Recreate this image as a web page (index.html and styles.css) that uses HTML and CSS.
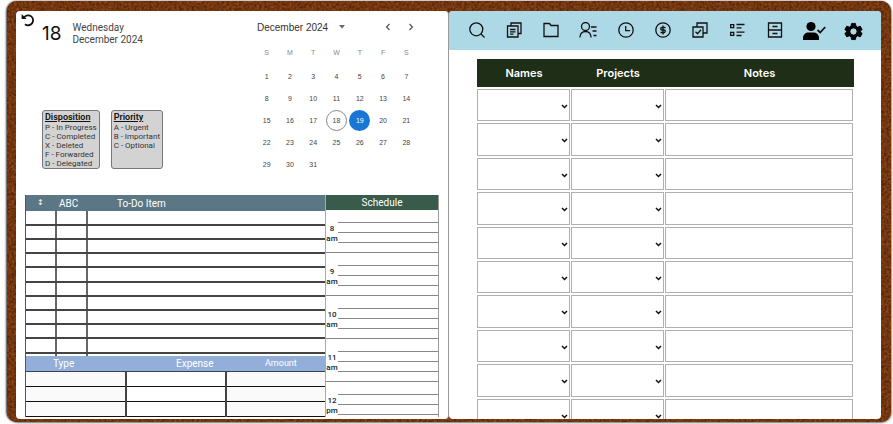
FILE: index.html
```html
<!DOCTYPE html>
<html lang="en">
<head>
<meta charset="utf-8">
<title>Day Planner</title>
<link rel="stylesheet" href="styles.css">
</head>
<body>
<main class="binder">
  <svg class="leather" aria-hidden="true">
    <filter id="grain" x="0" y="0" width="100%" height="100%" color-interpolation-filters="sRGB">
      <feTurbulence type="fractalNoise" baseFrequency="0.4" numOctaves="3" seed="4"/>
      <feColorMatrix values="0.4 0 0 0 0.25  0.24 0 0 0 0.09  0.12 0 0 0 0  0 0 0 0 1"/>
    </filter>
    <rect width="100%" height="100%" filter="url(#grain)"/>
  </svg>

  <section class="page page-left">
    <div class="top">
      <div class="top-info">
        <button class="undo" aria-label="Back to today">
          <svg viewBox="0 0 14 14" width="14" height="14"><path d="M3.2 4.2A5 5 0 1 1 4 11.2" fill="none" stroke="#111" stroke-width="1.8"/><path d="M.6 1v5h5z" fill="#111"/></svg>
        </button>
        <div class="date">
          <span class="day-number">18</span>
          <span class="day-text">Wednesday<br>December 2024</span>
        </div>
        <div class="legends">
          <div class="legend"><h2>Disposition</h2><ul><li>P - In Progress</li><li>C - Completed</li><li>X - Deleted</li><li>F - Forwarded</li><li>D - Delegated</li></ul></div>
          <div class="legend"><h2>Priority</h2><ul><li>A - Urgent</li><li>B - Important</li><li>C - Optional</li></ul></div>
        </div>
      </div>
      <div class="calendar">
        <div class="cal-head">
          <span>December 2024</span>
          <button aria-label="Choose year"><svg viewBox="0 0 8 6" width="8" height="6"><path d="M1 1h6L4 4.500z" fill="#666"/></svg></button>
          <span class="grow"></span>
          <button class="cal-nav" aria-label="Previous month"><svg viewBox="0 0 8 8" width="8" height="8"><path d="M5.500 1 2.500 4l3 3" fill="none" stroke="#555" stroke-width="1.200"/></svg></button>
          <button class="cal-nav" aria-label="Next month"><svg viewBox="0 0 8 8" width="8" height="8"><path d="m2.500 1 3 3-3 3" fill="none" stroke="#555" stroke-width="1.200"/></svg></button>
        </div>
        <div class="weekdays"><span>S</span><span>M</span><span>T</span><span>W</span><span>T</span><span>F</span><span>S</span></div>
        <div class="days" id="days"></div>
      </div>
    </div>

    <div class="lists">
      <div class="lists-main">
        <div class="todo-wrap">
          <table class="todo">
            <thead><tr><th class="c-mark">↕</th><th class="c-abc">ABC</th><th class="c-item">To-Do Item</th></tr></thead>
            <tbody id="todo"></tbody>
          </table>
        </div>
        <table class="expense">
          <thead><tr><th class="e-type">Type</th><th class="e-name">Expense</th><th class="e-amount">Amount</th></tr></thead>
          <tbody id="expense"></tbody>
        </table>
      </div>
      <div class="schedule">
        <h2>Schedule</h2>
        <div id="hours"></div>
      </div>
    </div>
  </section>

  <section class="page page-right">
    <nav class="toolbar">
      <button aria-label="Search"><svg viewBox="0 0 16 16"><circle cx="7.300" cy="7.300" r="6.500"/><path d="m12 12 3.500 3.500"/></svg></button>
      <button aria-label="Documents"><svg viewBox="0 0 16 16"><path d="M5 4V1h10v10.500h-3M1.500 4H12v11H1.500zM4 7.500h5.500M4 9.800h5.500M4 12.100h3.500"/></svg></button>
      <button aria-label="Folder"><svg viewBox="0 0 16 16"><path d="M1 1.500h5.500L8 3.500h7v11H1z"/></svg></button>
      <button aria-label="Contacts"><svg viewBox="0 0 18 16" class="wide"><circle cx="6.500" cy="4.500" r="4"/><path d="M.8 15.500C1.200 11.500 3.500 9.500 6.500 9.500s5.300 2 5.700 6M12 5h5.500M13.500 9h4M14.500 13.500h3"/></svg></button>
      <button aria-label="Time"><svg viewBox="0 0 16 16"><circle cx="8" cy="8" r="7.200"/><path d="M7.700 4v4.700H12"/></svg></button>
      <button aria-label="Finance"><svg viewBox="0 0 16 16"><circle cx="8" cy="8" r="7.200"/><path d="M10.500 5.500H7A1.200 1.200 0 0 0 7 8h2a1.200 1.200 0 0 1 0 2.500H5.500M8 3.500v9"/></svg></button>
      <button aria-label="Tasks"><svg viewBox="0 0 16 16"><path d="M5 5V1h10v10h-4M1 5h10v10H1zM3.500 9.800l2 2 3.500-4"/></svg></button>
      <button aria-label="List"><svg viewBox="0 0 16 16"><path d="M1.700 2.700h3v3h-3zM1.700 10.300h3v3h-3zM7.500 2.500h8M7.500 5.800h5M7.500 10.200h8M7.500 13.500h5"/></svg></button>
      <button aria-label="Archive"><svg viewBox="0 0 16 16"><path d="M1.500 1h13v14h-13zM1.500 8h13M5.500 4.500h5M5.500 11.500h5"/></svg></button>
      <button aria-label="Account"><svg viewBox="0 0 24 20" class="account"><circle cx="9" cy="5.500" r="4.600" fill="#000" stroke="none"/><path d="M1 19v-2c0-3.500 2.500-5.500 6-5.500h4c3.500 0 6 2 6 5.500v2z" fill="#000" stroke="none"/><path d="m15.500 9 2.700 2.500 5-5.500" stroke-width="1.800"/></svg></button>
      <button aria-label="Settings"><svg viewBox="0 0 20 20" class="gear"><path fill="#000" stroke="#000" stroke-width="1" stroke-linejoin="round" fill-rule="evenodd" d="M8 1.500h4l.6 2.900 1.700 1 2.800-1 2 3.500-2.200 2 0 .2 2.200 2-2 3.500-2.800-1-1.700 1-.6 2.900H8l-.6-2.900-1.700-1-2.800 1-2-3.500 2.200-2 0-.2-2.200-2 2-3.500 2.800 1 1.700-1zM10 6.200a3.800 3.800 0 1 0 0 7.600 3.800 3.800 0 1 0 0-7.600z"/></svg></button>
    </nav>
    <div class="notes-wrap">
      <table class="notes">
        <thead><tr><th class="n-name">Names</th><th class="n-project">Projects</th><th>Notes</th></tr></thead>
      </table>
      <table class="notes notes-body">
        <tbody id="notes"></tbody>
      </table>
    </div>
  </section>
</main>
<script src="planner.js"></script>
</body>
</html>
```

FILE: styles.css
```css
* { box-sizing: border-box; }
body {
  margin: 0;
  height: 100vh;
  padding: 1px 2px 2px 7px;
  overflow: hidden;
  background: #fff;
  font-family: Roboto, "Liberation Sans", sans-serif;
  color: #222;
}
h2, ul { margin: 0; padding: 0; list-style: none; }
button { border: 0; padding: 0; background: none; font: inherit; color: inherit; }
table { border-collapse: collapse; table-layout: fixed; width: 100%; }
th, td { padding: 0; }

.binder {
  position: relative;
  display: flex;
  height: 100%;
  padding: 10px 10px 3px 9px;
  border-radius: 10px;
  background: #703610;
  box-shadow: -1px 0 2px #444, 1px 1px 2px #999;
}
.leather { position: absolute; inset: 0; width: 100%; height: 100%; border-radius: 10px; }
.page { position: relative; flex: 1 1 0; min-width: 0; background: #fff; overflow: hidden; border-radius: 4px; }
.page-left { display: flex; flex-direction: column; border-right: 1px solid #999; }

.top { display: flex; justify-content: space-between; height: 184px; padding: 0 30px 0 5px; }
.undo { display: block; height: 14px; margin-top: 2px; }
.undo svg { display: block; }
.date { display: flex; align-items: center; gap: 11px; padding-left: 21px; height: 14px; }
.day-number { font-family: Inter, sans-serif; font-size: 19px; line-height: 22px; color: #111; }
.day-text { font-size: 10px; line-height: 12px; color: #444; }
.legends { display: flex; gap: 11px; padding: 69px 0 0 21px; }
.legend { height: 59px; padding: 1px 2px; border: 1px solid #777; border-radius: 3px; background: #d3d3d3; }
.legend h2 { font-size: 9px; line-height: 11px; text-decoration: underline; font-weight: 600; color: #111; }
.legend li { font-size: 8px; line-height: 9px; color: #333; white-space: nowrap; }

.calendar { width: 163px; font-family: "Liberation Sans", sans-serif; }
.cal-head { display: flex; align-items: center; height: 32px; padding-left: 2px; font-size: 10px; color: #333; }
.cal-head button { width: 23px; height: 20px; display: grid; place-items: center; margin-left: 2px; }
.cal-head .cal-nav { margin: 0; }
.cal-head .cal-nav:last-child { margin-right: -4px; }
.grow { flex: 1; }
.weekdays, .days { display: grid; grid-template-columns: repeat(7, 1fr); justify-items: center; align-items: center; font-size: 7px; }
.weekdays { height: 18px; color: #888; }
.days { grid-auto-rows: 22px; padding-top: 4px; color: #444; }
.days button { width: 21px; height: 21px; border-radius: 50%; }
.days .today { border: 1px solid #888; }
.days .selected { background: #1976d2; color: #fff; }

.lists { display: flex; flex: 1; min-height: 0; padding: 0 9px 2px; }
.lists-main { display: flex; flex-direction: column; width: 301px; border-left: 1px solid #555; border-right: 1px solid #aaa; }
.lists-main th { color: #fff; font-weight: 400; font-size: 10px; text-align: left; }
.todo-wrap { flex: 1; min-height: 0; overflow: hidden; }
.todo th { height: 16px; background: #5b7785; }
.todo td { height: 14px; border-bottom: 2px solid #444; border-right: 2px solid #666; }
.todo tr:nth-child(5n) td { height: 15px; }
.todo td:last-child { border-right: 0; }
.c-mark { width: 30px; }
.c-abc { width: 31px; }
.todo .c-mark { padding-left: 11px; font-family: "DejaVu Sans", sans-serif; font-size: 8px; line-height: 10px; }
.todo .c-abc { padding-left: 3px; }
.todo .c-item { padding-left: 30px; }
.expense { height: 61px; }
.expense th { height: 15px; background: #93afd9; border-bottom: 1px solid #345; }
.expense td { height: 15px; border-bottom: 1px solid #111; border-right: 2px solid #444; background: #fafafa; }
.expense td:nth-child(2) { background: #fff; }
.expense td:last-child { border-right: 0; }
.e-type, .e-name { width: 100px; }
.expense .e-type { padding-left: 27px; }
.expense .e-name { padding-left: 50px; }
.expense .e-amount { padding-left: 39px; font-size: 9px; }

.schedule { flex: 1; overflow: hidden; border-right: 1px solid #999; }
.schedule h2 { height: 15px; background: #385b4c; color: #fff; font-weight: 400; font-size: 10px; line-height: 15px; text-align: center; }
.hour { display: grid; grid-template-columns: 12px 1fr; height: 43px; border-bottom: 1px solid #888; }
.hour span { padding-top: 14px; font-size: 8px; line-height: 10px; font-weight: 500; text-align: center; color: #222; }
.slots { display: grid; grid-template-rows: 13px 10px 10px; }
.slots i { border-bottom: 1px solid #888; }

.toolbar { display: flex; align-items: center; height: 39px; padding: 0 7px 2px 9px; background: #add8e6; }
.toolbar button { flex: 37 1 0; display: grid; place-items: center; }
.toolbar button:nth-child(n+10) { flex-grow: 40; }
.toolbar svg { width: 16px; height: 16px; fill: none; stroke: #111; stroke-width: 1.3; }
.toolbar .wide { width: 18px; }
.toolbar .account { width: 24px; height: 20px; margin-top: 3px; }
.toolbar .gear { width: 19px; height: 19px; margin-top: 3px; }

.notes-wrap { padding: 9px 27px 0 28px; }
.notes th { height: 28px; background: #1f2e17; color: #fff; font-family: Inter, sans-serif; font-size: 11px; font-weight: 600; }
.n-name, .n-project { width: 94px; }
.notes-body { margin-top: 2px; border-collapse: separate; border-spacing: 0; }
.notes-body td { padding: 0 1px 2px 0; }
.notes-body td:nth-child(-n+2) { width: 94px; }
.cell { position: relative; height: 32px; border: 1px solid #b0b0b0; }
tr:nth-child(5n+2) .cell, tr:nth-child(5n+4) .cell { height: 33px; }
.cell select, .cell input { display: block; width: 100%; height: 100%; border: 0; padding: 0 4px; background: transparent; appearance: none; font: inherit; font-size: 10px; }
.cell svg { position: absolute; right: 1px; top: 14px; width: 7px; height: 5px; pointer-events: none; }
```

FILE: planner.js
```js
const fill = (id, html) => { document.getElementById(id).innerHTML = html; };
const repeat = (count, make) => Array.from({ length: count }, (_, i) => make(i)).join('');

fill('days', repeat(31, i => {
  const day = i + 1;
  const state = day === 18 ? ' class="today"' : day === 19 ? ' class="selected"' : '';
  return `<button${state}>${day}</button>`;
}));
fill('todo', repeat(11, () => '<tr><td></td><td></td><td></td></tr>'));
fill('expense', repeat(3, () => '<tr><td></td><td></td><td></td></tr>'));
fill('hours', ['8 am', '9 am', '10 am', '11 am', '12 pm'].map(hour =>
  `<div class="hour"><span>${hour.replace(' ', '<br>')}</span><div class="slots"><i></i><i></i><i></i></div></div>`).join(''));

const picker = label => `<td><div class="cell"><select aria-label="${label}"><option></option></select>
  <svg viewBox="0 0 7 5"><path d="m1 1 2.500 2.500L6 1" fill="none" stroke="#111" stroke-width="1.500"/></svg></div></td>`;
fill('notes', repeat(10, i => `<tr>${picker('Name ' + (i + 1))}${picker('Project ' + (i + 1))}
  <td><div class="cell"><input type="text" aria-label="Note ${i + 1}"></div></td></tr>`));
```
